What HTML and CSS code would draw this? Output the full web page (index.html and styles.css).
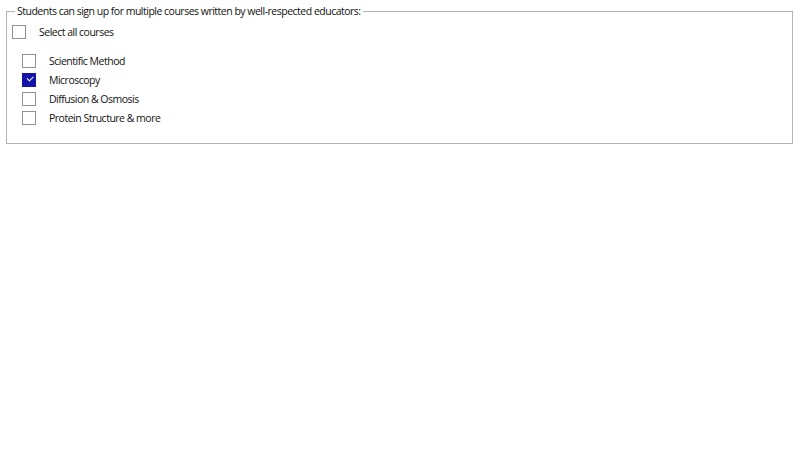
FILE: index.html
```html
<!DOCTYPE html>
<html lang="en">
<head>
<meta charset="utf-8">
<title>Courses</title>
<link rel="stylesheet" href="styles.css">
</head>
<body>
<fieldset class="courses">
  <legend class="courses-legend">Students can sign up for multiple courses written by well-respected educators:</legend>
  <label class="row">
    <input type="checkbox" class="box">
    <span class="text">Select all courses</span>
  </label>
  <ul class="list">
    <li><label class="row"><input type="checkbox" class="box"><span class="text">Scientific Method</span></label></li>
    <li><label class="row"><input type="checkbox" class="box" checked><span class="text">Microscopy</span></label></li>
    <li><label class="row"><input type="checkbox" class="box"><span class="text">Diffusion &amp; Osmosis</span></label></li>
    <li><label class="row"><input type="checkbox" class="box"><span class="text">Protein Structure &amp; more</span></label></li>
  </ul>
</fieldset>
</body>
</html>
```
FILE: styles.css
```css
html, body {
  margin: 0;
  padding: 0;
  background: #ffffff;
}

body {
  font-family: "Open Sans", "Noto Sans", "Liberation Sans", sans-serif;
  font-size: 10.5px;
  letter-spacing: -0.5px;
  color: #111111;
}

.courses {
  margin: 4px 7px 0 6px;
  padding: 3px 0 16px 5px;
  border: 1px solid #b4b4b4;
  min-width: 0;
}

.courses-legend {
  margin-left: 3px;
  padding: 0 2px;
  line-height: 15px;
}

.row {
  display: flex;
  align-items: center;
  height: 19px;
}

.box {
  appearance: none;
  -webkit-appearance: none;
  width: 14px;
  height: 14px;
  margin: 0 13px 0 0;
  border: 1px solid #929292;
  background: #ffffff;
  position: relative;
  flex: none;
}

.box:checked {
  background: #1414aa;
  border-color: #1414aa;
}

.box:checked::after {
  content: "";
  position: absolute;
  left: 3.5px;
  top: 2.5px;
  width: 5px;
  height: 2.5px;
  border-left: 1.5px solid #ffffff;
  border-bottom: 1.5px solid #ffffff;
  transform: rotate(-45deg);
}

.list {
  list-style: none;
  margin: 10px 0 0 10px;
  padding: 0;
}
```
